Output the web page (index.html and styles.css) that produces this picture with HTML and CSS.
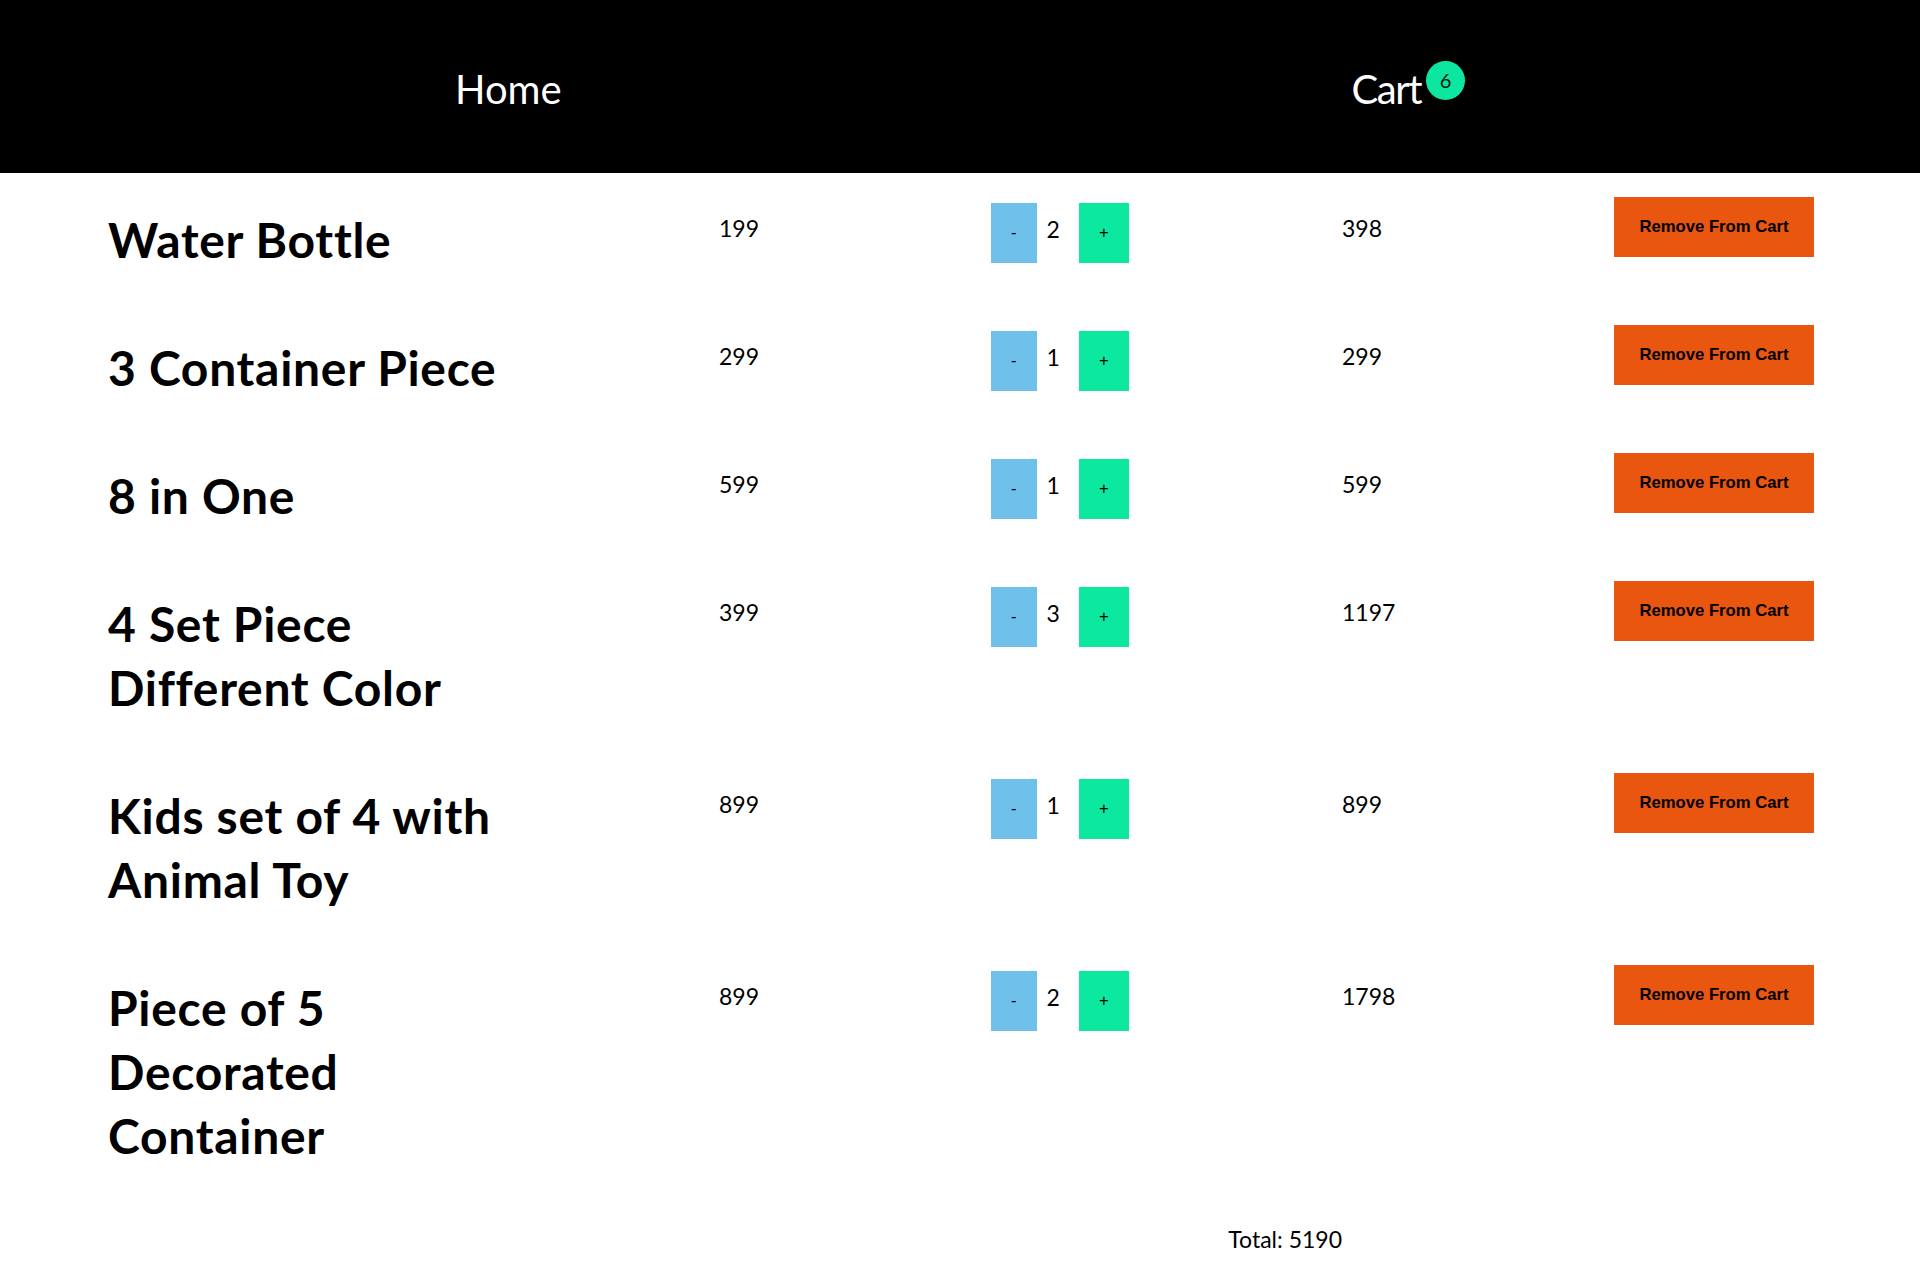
FILE: index.html
```html
<!DOCTYPE html>
<html lang="en">
<head>
<meta charset="utf-8">
<title>Cart</title>
<link rel="stylesheet" href="styles.css">
</head>
<body>
<header class="topbar">
  <nav class="nav">
    <a class="nav-link" href="#">Home</a>
    <a class="nav-link nav-cart" href="#"><span class="cart-label">Cart</span><span class="badge">6</span></a>
  </nav>
</header>
<main class="cart">
  <div class="row">
    <h1 class="title">Water Bottle</h1>
    <p class="cell">199</p>
    <div class="qty"><button class="qbtn minus">-</button><span class="count">2</span><button class="qbtn plus">+</button></div>
    <p class="cell">398</p>
    <div><button class="remove">Remove From Cart</button></div>
  </div>
  <div class="row">
    <h1 class="title">3 Container Piece</h1>
    <p class="cell">299</p>
    <div class="qty"><button class="qbtn minus">-</button><span class="count">1</span><button class="qbtn plus">+</button></div>
    <p class="cell">299</p>
    <div><button class="remove">Remove From Cart</button></div>
  </div>
  <div class="row">
    <h1 class="title">8 in One</h1>
    <p class="cell">599</p>
    <div class="qty"><button class="qbtn minus">-</button><span class="count">1</span><button class="qbtn plus">+</button></div>
    <p class="cell">599</p>
    <div><button class="remove">Remove From Cart</button></div>
  </div>
  <div class="row">
    <h1 class="title">4 Set Piece Different Color</h1>
    <p class="cell">399</p>
    <div class="qty"><button class="qbtn minus">-</button><span class="count">3</span><button class="qbtn plus">+</button></div>
    <p class="cell">1197</p>
    <div><button class="remove">Remove From Cart</button></div>
  </div>
  <div class="row">
    <h1 class="title">Kids set of 4 with Animal Toy</h1>
    <p class="cell">899</p>
    <div class="qty"><button class="qbtn minus">-</button><span class="count">1</span><button class="qbtn plus">+</button></div>
    <p class="cell">899</p>
    <div><button class="remove">Remove From Cart</button></div>
  </div>
  <div class="row">
    <h1 class="title">Piece of 5 Decorated Container</h1>
    <p class="cell">899</p>
    <div class="qty"><button class="qbtn minus">-</button><span class="count">2</span><button class="qbtn plus">+</button></div>
    <p class="cell">1798</p>
    <div><button class="remove">Remove From Cart</button></div>
  </div>
  <div class="row summary">
    <p class="total">Total: 5190</p>
  </div>
</main>
</body>
</html>
```

FILE: styles.css
```css
html, body {
  margin: 0;
  padding: 0;
  background: #ffffff;
}

body {
  font-family: Lato, "Open Sans", sans-serif;
  color: #000000;
}

.topbar {
  background: #000000;
  height: 173px;
}

.nav {
  box-sizing: border-box;
  height: 100%;
  display: flex;
  justify-content: space-around;
  align-items: center;
  padding: 5px 60px 0;
}

.nav-link {
  color: #ffffff;
  text-decoration: none;
  font-size: 40px;
  line-height: 48px;
}

.nav-cart {
  display: flex;
  align-items: flex-start;
}

.cart-label {
  letter-spacing: -1.5px;
}

.badge {
  display: inline-block;
  width: 39px;
  height: 39px;
  margin-left: 5px;
  margin-top: -4px;
  border-radius: 50%;
  background: #0de6a0;
  color: #06150f;
  font-size: 20px;
  line-height: 39px;
  text-align: center;
}

.cart {
  display: block;
}

.row {
  display: grid;
  grid-template-columns: 611px 272px 351px 272px 200px;
  padding-left: 108px;
  align-items: start;
}

.title {
  margin: 35px 0 29px;
  max-width: 410px;
  font-size: 48px;
  line-height: 64px;
  font-weight: 700;
  letter-spacing: 0.7px;
}

.cell {
  margin: 0;
  padding-top: 39px;
  font-size: 23px;
  line-height: 32px;
}

.qty {
  display: flex;
  align-items: flex-start;
}

.qbtn {
  margin-top: 30px;
  height: 60px;
  padding: 0 20px;
  border: none;
  font-family: "Liberation Sans", Arial, sans-serif;
  font-size: 16.67px;
  color: #000000;
  cursor: pointer;
}

.minus {
  background: #6fc1ec;
}

.plus {
  background: #0de8a0;
}

.count {
  padding-top: 40px;
  margin: 0 19px 0 10px;
  font-size: 23px;
  line-height: 32px;
}

.remove {
  margin-top: 24px;
  width: 200px;
  height: 60px;
  border: none;
  background: #e8560f;
  color: #000000;
  font-family: "Liberation Sans", Arial, sans-serif;
  font-weight: 700;
  font-size: 16.67px;
  cursor: pointer;
}

.summary .total {
  grid-column: 3;
  margin: 26px 0 0;
  text-align: right;
  font-size: 23px;
  line-height: 32px;
}
```
